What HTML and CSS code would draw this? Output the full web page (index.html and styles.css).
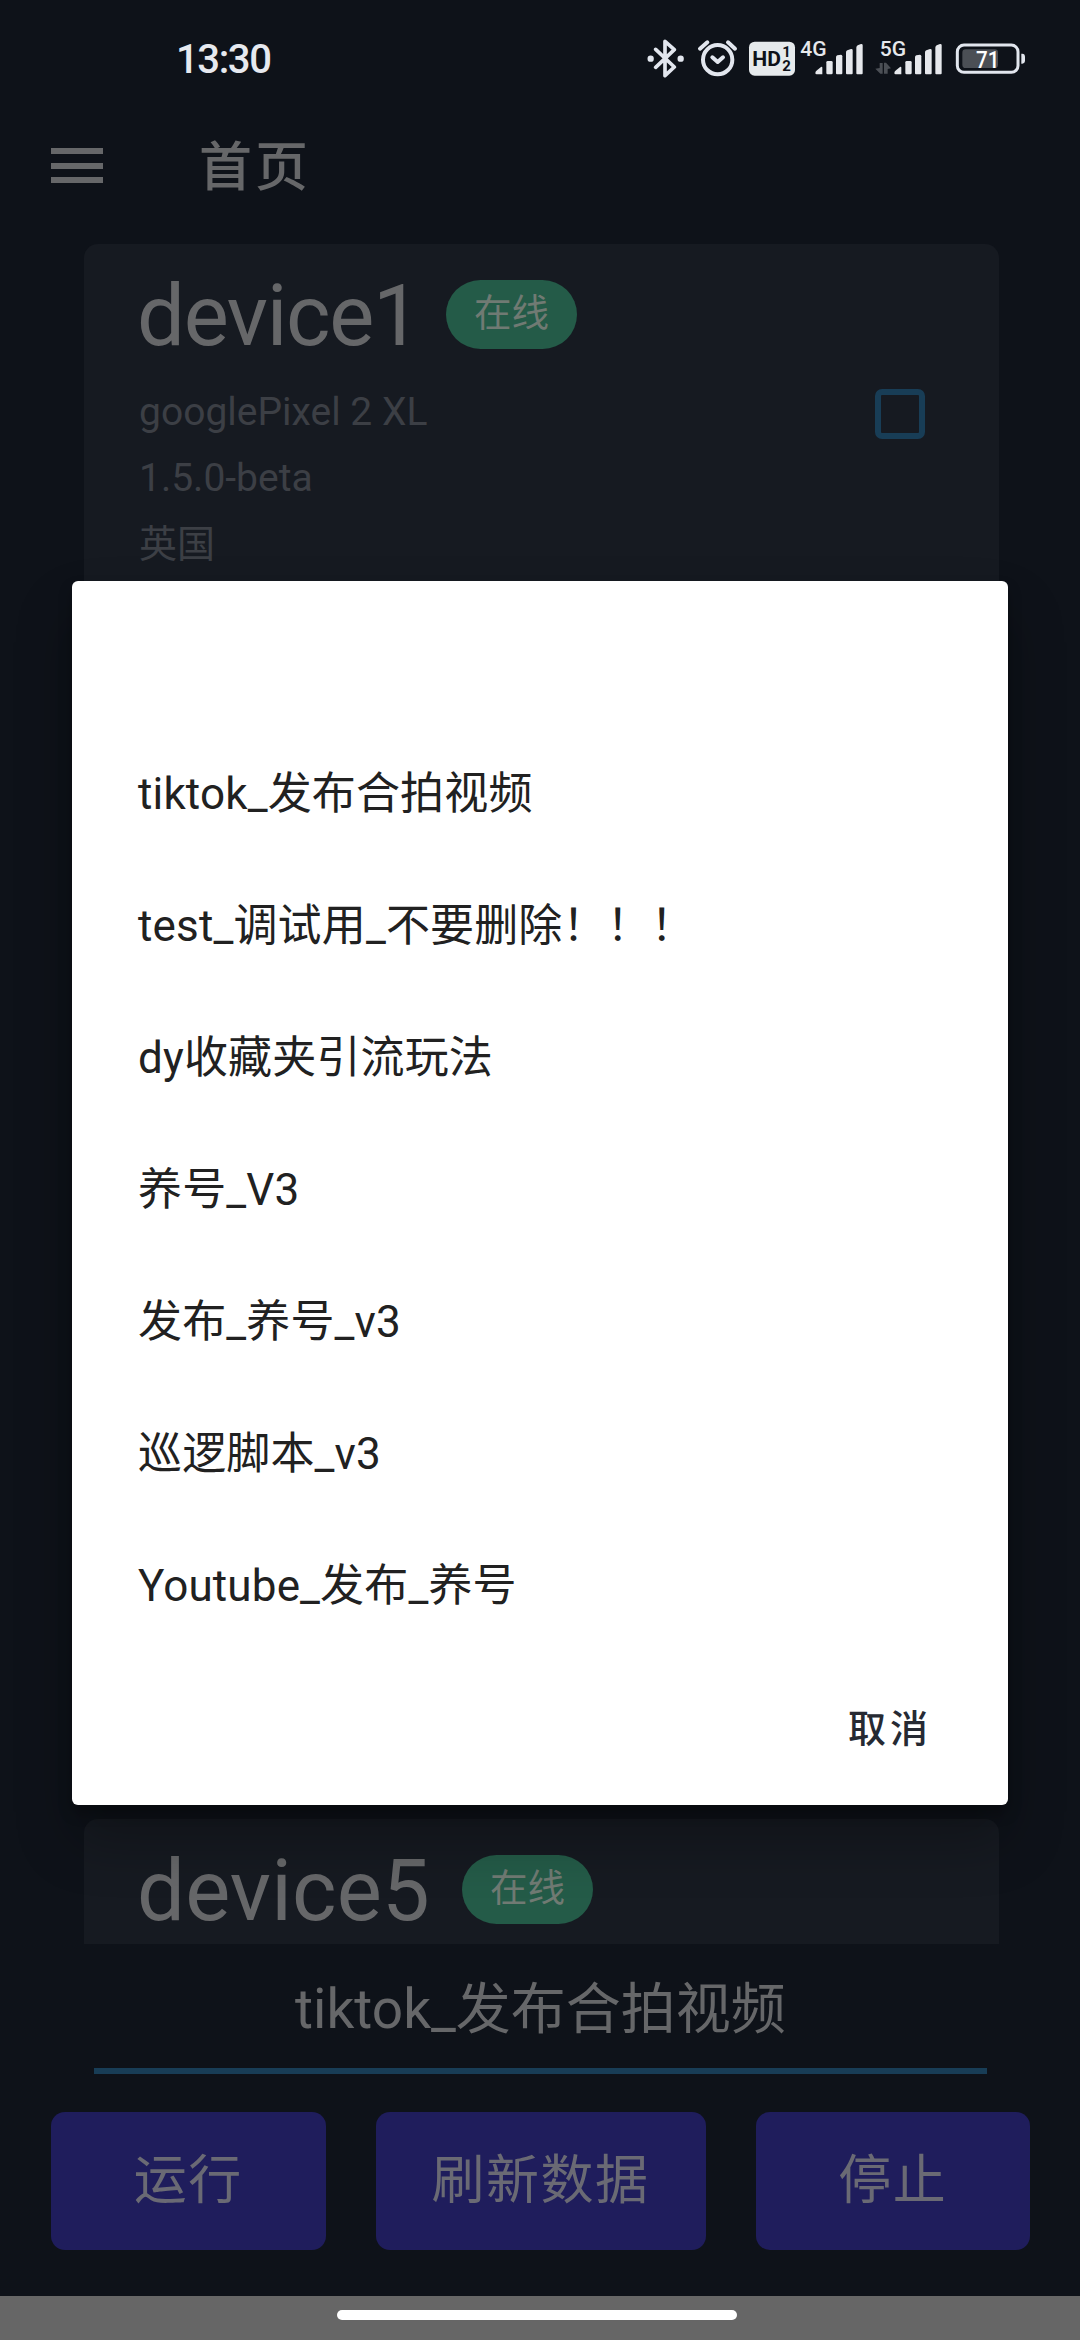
FILE: index.html
```html
<!DOCTYPE html>
<html lang="zh-CN">
<head>
<meta charset="utf-8">
<title>首页</title>
<link rel="stylesheet" href="styles.css">
</head>
<body>
<div class="screen">
  <header class="status">
    <span class="time">13:30</span>
    <div class="status-icons">
      <svg class="ic" width="40" height="40" viewBox="75 55 120 120" fill="none" stroke="#e2e6ee" stroke-width="11" stroke-linejoin="round" stroke-linecap="round"><path d="M104 89L160 142L132 168V65L160 90L104 143"/><circle cx="89" cy="117" r="4" fill="#e2e6ee"/><circle cx="179" cy="117" r="4" fill="#e2e6ee"/></svg>
      <svg class="ic alarm" width="43" height="40" viewBox="225 55 129 120" fill="none" stroke="#e2e6ee" stroke-width="12" stroke-linecap="round"><circle cx="290" cy="120" r="44"/><path d="M274 113L290 127L306 113" stroke-linejoin="round"/><path d="M237 87L259 68M321 68L342 87"/></svg>
      <svg class="ic hd" width="48" height="40" viewBox="381 55 144 120"><rect x="384" y="66" width="138" height="102" rx="17" fill="#e6eaec"/><g fill="#0e1219" font-family="Roboto" font-weight="700"><text x="394" y="138" font-size="59" textLength="86" lengthAdjust="spacingAndGlyphs">HD</text><text x="484" y="111" font-size="45" textLength="24">1</text><text x="484" y="155" font-size="45" textLength="26">2</text></g></svg>
      <svg class="ic g4" width="66" height="40" viewBox="534 55 198 120" fill="#e6e8ec"><text x="538" y="110" font-family="Roboto" font-weight="500" font-size="58" textLength="79" lengthAdjust="spacingAndGlyphs">4G</text><path d="M583 160Q583 155 588 152L600 142Q604 139 604 144V164H587Q583 164 583 160Z"/><rect x="616" y="124" width="19" height="40" rx="4"/><path d="M645 113Q645 109 649 107L660 105Q664 105 664 110V161Q664 164 661 164H648Q645 164 645 161Z"/><path d="M675 98Q675 94 679 92L690 88Q695 87 695 92V161Q695 164 692 164H678Q675 164 675 161Z"/><path d="M706 84Q706 79 710 77L720 73Q725 72 725 77V161Q725 164 722 164H709Q706 164 706 161Z"/></svg>
      <svg class="ic g5" width="68" height="40" viewBox="762 55 204 120" fill="#e6e8ec"><text x="776" y="110" font-family="Roboto" font-weight="500" font-size="58" textLength="79" lengthAdjust="spacingAndGlyphs">5G</text><path d="M763 147L776 145V130H785V162H778ZM789 162V129H795L810 146L800 148V162Z" fill="#4b4f55"/><g transform="translate(237 0)"><path d="M583 160Q583 155 588 152L600 142Q604 139 604 144V164H587Q583 164 583 160Z"/><rect x="616" y="124" width="19" height="40" rx="4"/><path d="M645 113Q645 109 649 107L660 105Q664 105 664 110V161Q664 164 661 164H648Q645 164 645 161Z"/><path d="M675 98Q675 94 679 92L690 88Q695 87 695 92V161Q695 164 692 164H678Q675 164 675 161Z"/><path d="M706 84Q706 79 710 77L720 73Q725 72 725 77V161Q725 164 722 164H709Q706 164 706 161Z"/></g></svg>
      <svg class="ic bat" width="71" height="40" viewBox="1002 55 213 120"><rect x="1009" y="76" width="182" height="82" rx="20" fill="none" stroke="#e2e6ee" stroke-width="9"/><rect x="1024" y="89" width="107" height="56" rx="10" fill="#4b4f55"/><path d="M1201 102H1204Q1212 102 1212 112V122Q1212 132 1204 132H1201Z" fill="#e2e6ee"/><text x="1065" y="144" font-family="Roboto" font-weight="500" font-size="73" fill="#fff" textLength="70" lengthAdjust="spacingAndGlyphs">71</text></svg>
    </div>
  </header>
  <nav class="appbar">
    <div class="menu"><i></i><i></i><i></i></div>
    <h1>首页</h1>
  </nav>
  <main class="devices">
    <section class="card">
      <div class="head"><span class="name n1">device1</span><span class="badge">在线</span></div>
      <div class="body">
        <div class="info"><p class="model">googlePixel 2 XL</p><p class="ver">1.5.0-beta</p><p class="region">英国</p></div>
        <span class="check"></span>
      </div>
    </section>
    <section class="card">
      <div class="head"><span class="name n5">device5</span><span class="badge">在线</span></div>
    </section>
  </main>
  <div class="select">tiktok_发布合拍视频</div>
  <div class="actions">
    <button class="btn">运行</button>
    <button class="btn wide">刷新数据</button>
    <button class="btn">停止</button>
  </div>
  <footer class="navbar"><span class="handle"></span></footer>
</div>
<div class="dialog">
  <ul class="options">
    <li>tiktok_发布合拍视频</li>
    <li>test_调试用_不要删除！！！</li>
    <li>dy收藏夹引流玩法</li>
    <li>养号_V3</li>
    <li>发布_养号_v3</li>
    <li>巡逻脚本_v3</li>
    <li>Youtube_发布_养号</li>
  </ul>
  <div class="dialog-actions"><button class="cancel">取消</button></div>
</div>
</body>
</html>
```
FILE: styles.css
```css
* { box-sizing: border-box; margin: 0; padding: 0; }
body {
  width: 1080px; height: 2340px; overflow: hidden;
  background: #0e1219; color: #666769;
  font-family: Roboto, "Noto Sans CJK SC", sans-serif;
}
button { border: 0; background: none; font: inherit; color: inherit; }
.screen { width: 1080px; height: 2340px; display: flex; flex-direction: column; }

.status { height: 110px; display: flex; justify-content: space-between; padding: 38px 54px 0 176px; }
.time { font-size: 40px; font-weight: 500; line-height: 44px; color: #e6e9ef; letter-spacing: -1.4px; }
.status-icons { display: flex; }
.ic { display: block; }
.alarm { margin-left: 10px; }
.hd { margin-left: 9px; }
.g4 { margin-left: 3px; }
.g5 { margin-left: 10px; }
.bat { margin-left: 12px; }

.appbar { height: 134px; display: flex; align-items: flex-start; padding: 0 51px; }
.menu { width: 52px; margin: 38px 96px 0 0; display: flex; flex-direction: column; gap: 8.5px; }
.menu i { height: 6px; background: #666769; }
.appbar h1 { font-size: 53px; line-height: 60px; margin-top: 28px; font-weight: 500; letter-spacing: 3px; }

.devices { height: 1700px; padding: 0 81px 0 84px; display: flex; flex-direction: column; justify-content: space-between; overflow: hidden; }
.card { height: 370px; flex: none; background: #161a21; border-radius: 14px; padding: 21px 56px 0; }
.card:last-child { height: 125px; border-radius: 14px 14px 0 0; }
.head { display: flex; align-items: center; height: 99px; }
.name { font-size: 85px; line-height: 98px; padding-top: 3px; text-indent: -3px; }
.n1 { width: 306px; letter-spacing: -1.3px; }
.n5 { width: 322px; letter-spacing: 0.2px; }
.badge { width: 131px; height: 69px; border-radius: 35px; background: #245b48; color: #707a73; font-size: 37.5px; line-height: 67px; text-align: center; }
.body { display: flex; justify-content: space-between; padding-right: 18px; }
.info { font-size: 39px; line-height: 66px; padding-top: 15px; color: #3c3f45; margin-left: -1px; }
.region { font-size: 38px; }
.check { width: 50px; height: 50px; margin-top: 25px; border: 6px solid #183d56; border-radius: 7px; }

.select { height: 130px; margin: 0 93px 0 94px; border-bottom: 6px solid #183d56; font-size: 55px; line-height: 131px; text-align: center; }
.actions { height: 222px; padding: 38px 50px 0 51px; display: flex; justify-content: space-between; }
.btn { width: 274.5px; height: 138px; border-radius: 14px; background: #1f1d5c; color: #6a6a74; font-size: 53px; letter-spacing: 1.5px; line-height: 135px; }
.btn.wide { width: 330px; }
.navbar { height: 44px; background: #666; display: flex; justify-content: center; padding: 14px 6px 0 0; }
.handle { width: 400px; height: 10px; border-radius: 5px; background: #fff; }

.dialog {
  position: absolute; left: 72px; top: 581px; width: 936px; height: 1224px;
  background: #fff; border-radius: 6px; padding-top: 147px;
  box-shadow: 0 34px 56px rgba(0, 0, 0, .28), 0 8px 14px rgba(0, 0, 0, .25);
}
.options { list-style: none; }
.options li { height: 132px; padding-left: 66px; font-size: 44px; line-height: 132px; letter-spacing: 0.15px; color: #212121; }
.dialog-actions { display: flex; justify-content: flex-end; padding: 18px 76px 0 0; }
.cancel { height: 110px; font-size: 38px; font-weight: 500; letter-spacing: 4px; color: #262a33; }
```
